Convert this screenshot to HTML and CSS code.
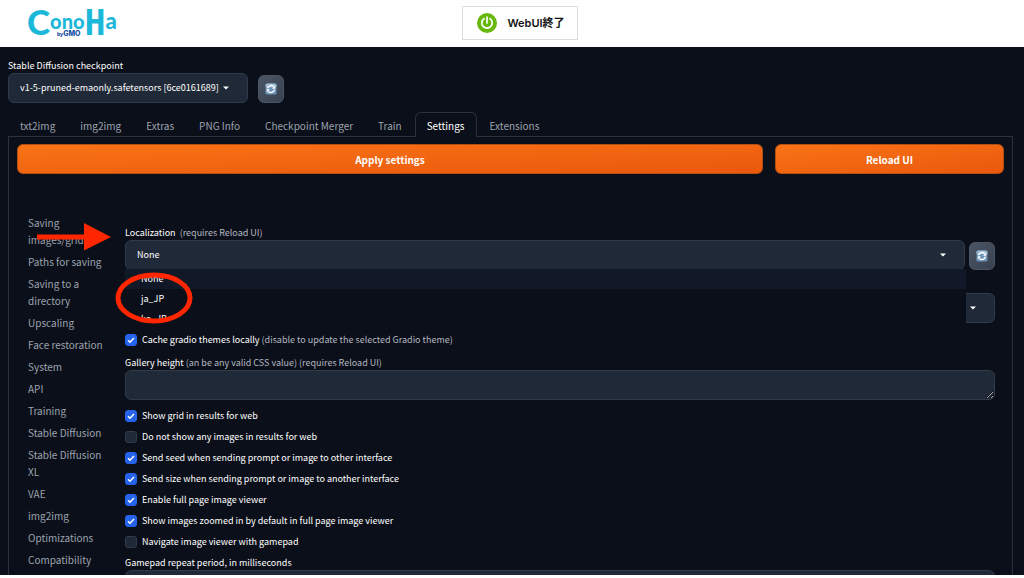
FILE: index.html
```html
<!DOCTYPE html>
<html lang="ja">
<head>
<meta charset="utf-8">
<meta name="viewport" content="width=device-width, initial-scale=1">
<title>Stable Diffusion WebUI</title>
<link rel="stylesheet" href="styles.css">
</head>
<body>
<svg class="defs" aria-hidden="true">
  <symbol id="caret" viewBox="0 0 8 8"><path d="M1 2.500h6L4 5.500z" fill="#fff"/></symbol>
  <symbol id="refresh" viewBox="0 0 12 12">
    <rect x=".5" y=".5" width="11" height="11" rx="1.6" fill="#6b93b8"/>
    <rect x=".5" y=".5" width="11" height="4" rx="1.6" fill="#9db9d1"/>
    <path d="M2.6 5.4A3.5 3.5 0 0 1 8.6 3.6M9.4 6.6A3.5 3.5 0 0 1 3.4 8.4" fill="none" stroke="#fff" stroke-width="1.5"/>
    <path d="M10.2 2.6v3.2H7zM1.800 9.400V6.200H5z" fill="#fff"/>
  </symbol>
</svg>
<header class="topbar">
  <a class="brand" href="#" aria-label="ConoHa by GMO">
    <svg class="brand-mark" viewBox="0 0 92 30" aria-hidden="true">
      <text class="brand-name" x="-1" y="27"><tspan font-size="35">C</tspan><tspan y="21" font-size="20">ono</tspan><tspan class="tall" y="27" font-size="35">H</tspan><tspan y="21" font-size="22">a</tspan></text>
      <text class="brand-by" x="29" y="28"><tspan font-size="5">by</tspan><tspan font-size="7">GMO</tspan></text>
    </svg>
  </a>
  <button class="shutdown" type="button">
    <svg class="power" viewBox="0 0 20 20" aria-hidden="true">
      <circle cx="10" cy="10" r="10" fill="#68b80c"/>
      <path d="M7 5.700A5.200 5.200 0 1 0 13 5.700M10 4v6" fill="none" stroke="#fff" stroke-width="1.700" stroke-linecap="round"/>
    </svg>
    WebUI終了
  </button>
</header>
<main class="app">
  <section class="checkpoint">
    <div class="field">
      <label for="ckpt">Stable Diffusion checkpoint</label>
      <div class="select"><select id="ckpt"><option>v1-5-pruned-emaonly.safetensors [6ce0161689]</option></select><svg class="caret"><use href="#caret"/></svg></div>
    </div>
    <button class="icon-button" type="button" aria-label="Refresh checkpoints"><svg><use href="#refresh"/></svg></button>
  </section>
  <nav class="tabs">
    <button type="button">txt2img</button><button type="button">img2img</button><button type="button">Extras</button><button type="button">PNG Info</button><button type="button">Checkpoint Merger</button><button type="button">Train</button><button type="button" class="active">Settings</button><button type="button">Extensions</button>
  </nav>
  <section class="panel">
    <div class="actions">
      <button type="button" class="primary apply">Apply settings</button>
      <button type="button" class="primary reload">Reload UI</button>
    </div>
    <div class="settings">
      <nav class="sections">
        <button type="button">Saving images/grids</button>
        <button type="button">Paths for saving</button>
        <button type="button">Saving to a directory</button>
        <button type="button">Upscaling</button>
        <button type="button">Face restoration</button>
        <button type="button">System</button>
        <button type="button">API</button>
        <button type="button">Training</button>
        <button type="button">Stable Diffusion</button>
        <button type="button">Stable Diffusion XL</button>
        <button type="button">VAE</button>
        <button type="button">img2img</button>
        <button type="button">Optimizations</button>
        <button type="button">Compatibility</button>
      </nav>
      <form class="options">
        <div class="localization">
          <div class="field">
            <label for="loc">Localization <span class="note">&nbsp;(requires Reload UI)</span></label>
            <div class="select">
              <select id="loc"><option>None</option></select><svg class="caret"><use href="#caret"/></svg>
              <ul class="menu"><li class="current">None</li><li>ja_JP</li><li>ko_JP</li></ul>
            </div>
          </div>
          <button class="icon-button" type="button" aria-label="Refresh localizations"><svg><use href="#refresh"/></svg></button>
          <svg class="arrow" viewBox="0 0 74 28" aria-hidden="true"><path d="M0 11.500h47V0l27 14-27 13.500V16.500H0z" fill="#ff2600"/></svg>
          <svg class="ring" viewBox="0 0 78 52" aria-hidden="true"><ellipse cx="39" cy="26" rx="36" ry="23" fill="none" stroke="#ff2600" stroke-width="5"/></svg>
        </div>
        <div class="select theme"><select aria-label="Gradio theme"><option></option></select><svg class="caret"><use href="#caret"/></svg></div>
        <label class="check"><input type="checkbox" checked><span>Cache gradio themes locally <span class="note">(disable to update the selected Gradio theme)</span></span></label>
        <div class="field gallery">
          <label for="gal">Gallery height <span class="note">(an be any valid CSS value) (requires Reload UI)</span></label>
          <textarea id="gal" rows="1"></textarea>
        </div>
        <div class="checks">
          <label class="check"><input type="checkbox" checked><span>Show grid in results for web</span></label>
          <label class="check"><input type="checkbox"><span>Do not show any images in results for web</span></label>
          <label class="check"><input type="checkbox" checked><span>Send seed when sending prompt or image to other interface</span></label>
          <label class="check"><input type="checkbox" checked><span>Send size when sending prompt or image to another interface</span></label>
          <label class="check"><input type="checkbox" checked><span>Enable full page image viewer</span></label>
          <label class="check"><input type="checkbox" checked><span>Show images zoomed in by default in full page image viewer</span></label>
          <label class="check"><input type="checkbox"><span>Navigate image viewer with gamepad</span></label>
        </div>
        <div class="field">
          <label for="pad">Gamepad repeat period, in milliseconds</label>
          <input id="pad" class="text" type="text">
        </div>
      </form>
    </div>
  </section>
</main>
</body>
</html>
```
FILE: styles.css
```css
* { box-sizing: border-box; }
body {
  margin: 0;
  height: 100vh;
  padding-bottom: 3px;
  display: flex;
  flex-direction: column;
  overflow: hidden;
  background: #fff;
  color: #fff;
  font: 400 9px/14px "Noto Sans CJK JP", "Noto Sans", sans-serif;
}
button, input, select, textarea { font: inherit; color: inherit; margin: 0; }
button { border: 0; background: none; padding: 0; }
.defs { position: absolute; width: 0; height: 0; }

.topbar {
  flex: none;
  display: grid;
  grid-template-columns: 1fr auto 1fr;
  align-items: center;
  height: 47px;
  padding: 0 12px 2px 28px;
}
.brand { display: block; width: 92px; height: 30px; }
.brand-mark { display: block; width: 92px; height: 30px; overflow: visible; }
.brand-name { fill: #1cb8da; font-family: Lato, sans-serif; font-weight: 900; }
.brand-name .tall { font-family: "DejaVu Sans Mono", monospace; font-weight: 700; }
.brand-by { fill: #1a4fa8; font-family: Inter, sans-serif; font-weight: 800; }
.shutdown {
  display: flex;
  align-items: center;
  gap: 10px;
  height: 34px;
  padding: 0 12px 0 14px;
  border: 1px solid #ddd;
  color: #111;
  font: 600 11px/16px Inter, "Noto Sans CJK JP", sans-serif;
}
.power { width: 20px; height: 20px; }

.app {
  flex: 1;
  min-height: 0;
  display: flex;
  flex-direction: column;
  overflow: hidden;
  padding: 12px 11px 0 8px;
  background: #0b0f19;
}
.checkpoint { display: flex; align-items: flex-end; gap: 10px; }
.checkpoint .select { width: 240px; }
.field > label { display: block; height: 14px; white-space: nowrap; }
.note { color: #b3b8c1; }
.select { position: relative; }
select, textarea, .text {
  display: block;
  width: 100%;
  height: 30px;
  padding: 0 11px;
  border: 1px solid #303b4a;
  border-radius: 6px;
  background: #1f2937;
  appearance: none;
}
.caret { position: absolute; right: 18px; top: 11px; width: 8px; height: 8px; pointer-events: none; }
.icon-button {
  flex: none;
  display: grid;
  place-items: center;
  width: 26px;
  height: 28px;
  border: 1px solid #4b5563;
  border-radius: 6px;
  background: linear-gradient(to bottom right, #4b5563, #374151);
}
.icon-button svg { width: 12px; height: 12px; }

.tabs { display: flex; gap: 1px; margin-top: 9px; position: relative; z-index: 1; }
.tabs button {
  height: 25px;
  margin-bottom: -1px;
  padding: 2px 11px 0;
  border: 1px solid transparent;
  border-bottom: 0;
  border-radius: 6px 6px 0 0;
  color: #9ca3af;
  font-size: 10px;
}
.tabs .active { border-color: #2a3140; background: #0b0f19; color: #fff; }
.panel { flex: 1; min-height: 0; padding: 7px 8px 0; border: 1px solid #2a3140; border-bottom: 0; }
.actions { display: flex; gap: 12px; }
.primary {
  height: 30px;
  padding-top: 1px;
  border: 1px solid #b4500f;
  border-radius: 6px;
  background: linear-gradient(to bottom right, #f97316, #ea580c);
  color: #fff;
  font-size: 10px;
  font-weight: 700;
}
.apply { flex: 747; }
.reload { flex: 228; }

.settings { display: flex; gap: 16px; padding: 40px 9px 0 11px; }
.sections { flex: none; width: 81px; display: flex; flex-direction: column; gap: 5px; }
.sections button { text-align: left; color: #9ca3af; font-size: 10px; line-height: 17px; }
.options { flex: 1; min-width: 0; padding-top: 12px; }
.localization { position: relative; display: flex; align-items: flex-end; gap: 4px; }
.localization .field { flex: 1; }
.menu {
  position: absolute;
  z-index: 2;
  left: 0;
  right: -1px;
  top: 29px;
  height: 59px;
  margin: 0;
  padding: 0;
  overflow: hidden;
  border-bottom: 9px solid #0b0f19;
  background: #0b0f19;
  list-style: none;
}
.menu li { height: 20px; padding-left: 16px; line-height: 20px; }
.menu .current { background: #111827; }
.arrow { position: absolute; z-index: 3; left: -88px; top: -3px; width: 74px; height: 28px; }
.ring { position: absolute; z-index: 3; left: -10px; top: 46px; width: 78px; height: 52px; }
.theme { margin-top: 23px; }
.check { display: flex; align-items: center; gap: 5px; height: 21px; white-space: nowrap; }
.check input {
  appearance: none;
  width: 12px;
  height: 12px;
  border: 1px solid #303b4a;
  border-radius: 3px;
  background: #1f2937;
}
.check input:checked {
  border-color: #2563eb;
  background: #2563eb url("data:image/svg+xml,%3Csvg xmlns='http://www.w3.org/2000/svg' viewBox='0 0 10 10'%3E%3Cpath d='M2 5.2l2 2L8 3' fill='none' stroke='white' stroke-width='1.500'/%3E%3C/svg%3E") center / 10px no-repeat;
}
.theme + .check { margin-top: 6px; }
.gallery { margin-top: 6px; }
.gallery textarea { resize: vertical; }
.checks { margin: 5px 0 4px; }
```
